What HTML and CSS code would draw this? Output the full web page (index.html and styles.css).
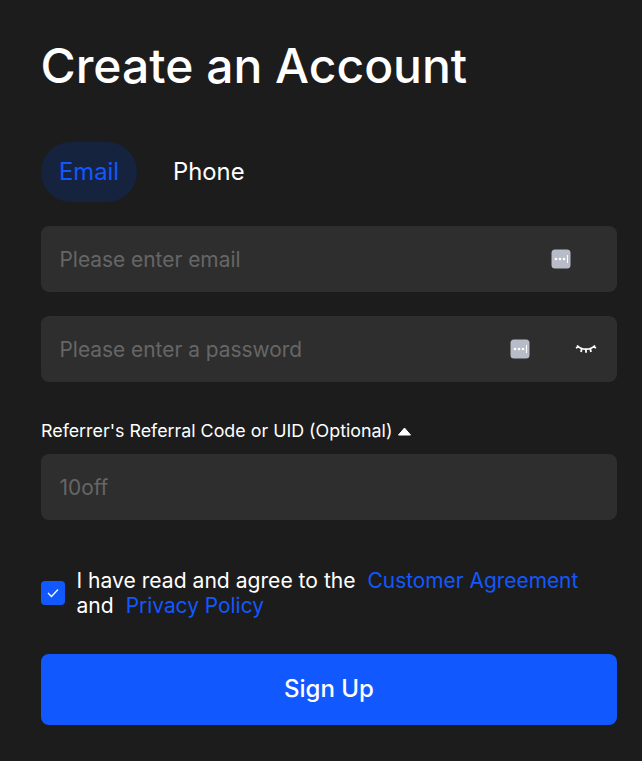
FILE: index.html
```html
<!DOCTYPE html>
<html lang="en">
<head>
    <meta charset="UTF-8">
    <title>Create an Account</title>
    <link rel="stylesheet" href="styles.css">
</head>
<body>

<main class="signup">
    <h1 class="title">Create an Account</h1>

    <div class="tabs">
        <div class="tab active">Email</div>
        <div class="tab">Phone</div>
    </div>

    <div class="field">
        <span class="placeholder">Please enter email</span>
        <span class="keyIcon first">
            <svg width="20" height="20" viewBox="0 0 20 20"><rect x="0.5" y="0.5" width="19" height="19" rx="3.5" fill="#b8bcc8"/><circle cx="5" cy="10" r="1.3" fill="#fff"/><circle cx="9" cy="10" r="1.3" fill="#fff"/><circle cx="13" cy="10" r="1.3" fill="#fff"/><rect x="16" y="6" width="1" height="8" fill="#fff"/></svg>
        </span>
    </div>

    <div class="field">
        <span class="placeholder">Please enter a password</span>
        <span class="keyIcon">
            <svg width="20" height="20" viewBox="0 0 20 20"><rect x="0.5" y="0.5" width="19" height="19" rx="3.5" fill="#b8bcc8"/><circle cx="5" cy="10" r="1.3" fill="#fff"/><circle cx="9" cy="10" r="1.3" fill="#fff"/><circle cx="13" cy="10" r="1.3" fill="#fff"/><rect x="16" y="6" width="1" height="8" fill="#fff"/></svg>
        </span>
        <svg class="eyeIcon" width="22" height="12" viewBox="0 0 22 12" fill="none" stroke="#fff" stroke-width="1.8"><path d="M2 2.500c2.500 2.700 5.500 3.700 9 3.700s6.500-1 9-3.700"/><path d="M1 5l2.800-1.500M21 5l-2.800-1.500M6.800 5.500L6 9M11 6v3.800M15.200 5.500l.8 3.500"/></svg>
    </div>

    <div class="refLabel">
        Referrer's Referral Code or UID (Optional)
        <svg class="caret" width="13" height="9" viewBox="0 0 13 9"><path d="M6.500 1L12.500 8H.5z" fill="#fff" stroke="#fff" stroke-linejoin="round"/></svg>
    </div>
    <div class="field">
        <span class="placeholder">10off</span>
    </div>

    <div class="agree">
        <span class="checkbox">
            <svg width="12" height="10" viewBox="0 0 12 10" fill="none" stroke="#fff" stroke-width="1.300"><path d="M1 5l3.500 3.500L11 1.500"/></svg>
        </span>
        <p class="agreeText">I have read and agree to the <a class="link">Customer Agreement</a><br>and <a class="link">Privacy Policy</a></p>
    </div>

    <button class="submit">Sign Up</button>
</main>

</body>
</html>
```

FILE: styles.css
```css
* {
    box-sizing: border-box;
}

body {
    margin: 0;
    background: #1c1c1c;
    color: #fff;
    font-family: Inter, "Liberation Sans", sans-serif;
}

.signup {
    width: 642px;
    height: 761px;
    padding: 36px 25px 0 41px;
    overflow: hidden;
}

.title {
    margin: 0 0 0 -0.5px;
    font-size: 48px;
    font-weight: 500;
    line-height: 60px;
}

.tabs {
    display: flex;
    gap: 18px;
    margin-top: 46px;
}

.tab {
    height: 60px;
    padding: 0 18px;
    font-size: 23.8px;
    line-height: 60px;
    border-radius: 30px;
}

.tab.active {
    color: #1258ff;
    background: #16233f;
}

.field {
    display: flex;
    align-items: center;
    height: 66px;
    margin-top: 24px;
    padding: 0 20px 0 18.5px;
    background: #2e2e2e;
    border-radius: 8px;
}

.placeholder {
    flex: 1;
    padding-top: 1px;
    color: #666;
    font-size: 20.9px;
}

.keyIcon {
    display: flex;
    margin-right: 45.5px;
}

.keyIcon.first {
    margin-right: 26px;
}

.eyeIcon {
    display: block;
}

.refLabel {
    display: flex;
    align-items: center;
    gap: 6px;
    margin-top: 37px;
    font-size: 17.85px;
    line-height: 24px;
}

.refLabel + .field {
    margin-top: 11px;
}

.agree {
    display: flex;
    align-items: center;
    margin-top: 48px;
}

.checkbox {
    display: flex;
    flex: none;
    align-items: center;
    justify-content: center;
    width: 24px;
    height: 24px;
    margin-right: 11.5px;
    background: #1258ff;
    border-radius: 4px;
}

.agreeText {
    margin: 0;
    font-size: 21.1px;
    line-height: 25px;
}

.link {
    margin-left: 6px;
    color: #1258ff;
    font-size: 20.9px;
}

.submit {
    display: block;
    width: 100%;
    height: 71px;
    margin-top: 36px;
    padding-bottom: 4px;
    color: #fff;
    background: #1258ff;
    border: 0;
    border-radius: 8px;
    font-family: inherit;
    font-size: 24px;
    font-weight: 500;
}
```
